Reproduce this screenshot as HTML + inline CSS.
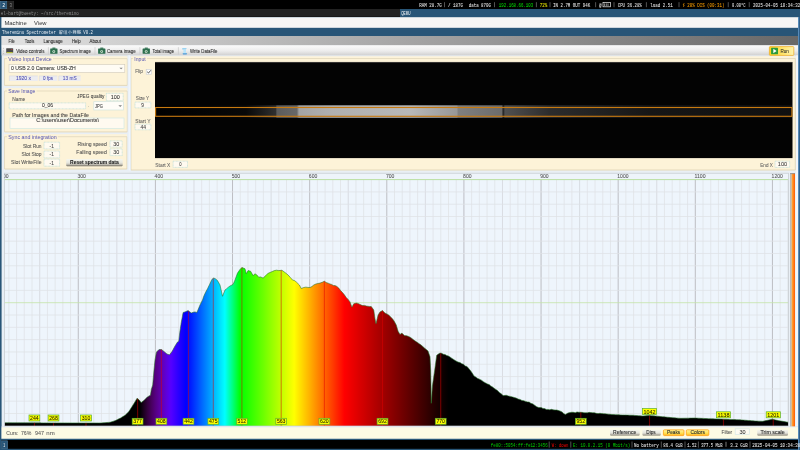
<!DOCTYPE html><html><head><meta charset="utf-8"><style>html,body{margin:0;padding:0;width:800px;height:450px;overflow:hidden;background:#000}svg{display:block}</style></head><body><svg width="800" height="450" viewBox="0 0 800 450"><defs><linearGradient id="mbar" x1="0" x2="1" y1="0" y2="0"><stop offset="0" stop-color="#e2e2e2"/><stop offset="0.5" stop-color="#a6a6a6"/><stop offset="1" stop-color="#686868"/></linearGradient><linearGradient id="tbar" x1="0" x2="0" y1="0" y2="1"><stop offset="0" stop-color="#fbfbfb"/><stop offset="0.55" stop-color="#ececec"/><stop offset="1" stop-color="#d0d0d0"/></linearGradient><linearGradient id="runbg" x1="0" x2="1" y1="0" y2="0"><stop offset="0" stop-color="#ffd21a"/><stop offset="1" stop-color="#fff4b0"/></linearGradient><linearGradient id="btn" x1="0" x2="0" y1="0" y2="1"><stop offset="0" stop-color="#f6f6ee"/><stop offset="0.55" stop-color="#e4e4dc"/><stop offset="0.8" stop-color="#b8b4aa"/><stop offset="1" stop-color="#6c685c"/></linearGradient><linearGradient id="obtn" x1="0" x2="0" y1="0" y2="1"><stop offset="0" stop-color="#fff6a0"/><stop offset="0.6" stop-color="#ffe050"/><stop offset="1" stop-color="#ffb020"/></linearGradient><linearGradient id="slider" x1="0" x2="1" y1="0" y2="0"><stop offset="0" stop-color="#b0b0b0"/><stop offset="0.28" stop-color="#c8c0b8"/><stop offset="0.3" stop-color="#ffb040"/><stop offset="1" stop-color="#ff5a00"/></linearGradient><linearGradient id="rborder" x1="0" x2="1" y1="0" y2="0"><stop offset="0" stop-color="#6aa0d0"/><stop offset="1" stop-color="#1e4a70"/></linearGradient><linearGradient id="camgrad" x1="0" x2="1" y1="0" y2="0"><stop offset="0" stop-color="#000"/><stop offset="0.142" stop-color="#080808"/><stop offset="0.167" stop-color="#1c1c1c"/><stop offset="0.189" stop-color="#303030"/><stop offset="0.1905" stop-color="#5c5c5c"/><stop offset="0.222" stop-color="#686868"/><stop offset="0.2253" stop-color="#a4a4a4"/><stop offset="0.277" stop-color="#b0b0b0"/><stop offset="0.4" stop-color="#b8b8b8"/><stop offset="0.4736" stop-color="#989898"/><stop offset="0.4752" stop-color="#808080"/><stop offset="0.5443" stop-color="#6c6c6c"/><stop offset="0.5459" stop-color="#1c1c1c"/><stop offset="0.549" stop-color="#505050"/><stop offset="0.62" stop-color="#2c2c2c"/><stop offset="0.777" stop-color="#161616"/><stop offset="1" stop-color="#101010"/></linearGradient><clipPath id="gc"><rect x="4.5" y="173.2" width="783.9" height="252.8"/></clipPath><linearGradient id="sp" x1="4.5" x2="788.4" y1="0" y2="0" gradientUnits="userSpaceOnUse"><stop offset="0.1630" stop-color="rgb(0,0,0)"/><stop offset="0.1679" stop-color="rgb(0,0,0)"/><stop offset="0.1728" stop-color="rgb(0,0,0)"/><stop offset="0.1777" stop-color="rgb(29,0,32)"/><stop offset="0.1827" stop-color="rgb(53,0,64)"/><stop offset="0.1876" stop-color="rgb(72,0,96)"/><stop offset="0.1925" stop-color="rgb(85,0,128)"/><stop offset="0.1974" stop-color="rgb(93,0,159)"/><stop offset="0.2023" stop-color="rgb(96,0,191)"/><stop offset="0.2073" stop-color="rgb(93,0,223)"/><stop offset="0.2122" stop-color="rgb(85,0,255)"/><stop offset="0.2171" stop-color="rgb(64,0,255)"/><stop offset="0.2220" stop-color="rgb(42,0,255)"/><stop offset="0.2269" stop-color="rgb(21,0,255)"/><stop offset="0.2319" stop-color="rgb(0,0,255)"/><stop offset="0.2368" stop-color="rgb(0,26,255)"/><stop offset="0.2417" stop-color="rgb(0,51,255)"/><stop offset="0.2466" stop-color="rgb(0,76,255)"/><stop offset="0.2515" stop-color="rgb(0,102,255)"/><stop offset="0.2565" stop-color="rgb(0,128,255)"/><stop offset="0.2614" stop-color="rgb(0,153,255)"/><stop offset="0.2663" stop-color="rgb(0,178,255)"/><stop offset="0.2712" stop-color="rgb(0,204,255)"/><stop offset="0.2761" stop-color="rgb(0,230,255)"/><stop offset="0.2811" stop-color="rgb(0,255,255)"/><stop offset="0.2860" stop-color="rgb(0,255,191)"/><stop offset="0.2909" stop-color="rgb(0,255,128)"/><stop offset="0.2958" stop-color="rgb(0,255,64)"/><stop offset="0.3007" stop-color="rgb(0,255,0)"/><stop offset="0.3057" stop-color="rgb(18,255,0)"/><stop offset="0.3106" stop-color="rgb(36,255,0)"/><stop offset="0.3155" stop-color="rgb(55,255,0)"/><stop offset="0.3204" stop-color="rgb(73,255,0)"/><stop offset="0.3253" stop-color="rgb(91,255,0)"/><stop offset="0.3303" stop-color="rgb(109,255,0)"/><stop offset="0.3352" stop-color="rgb(128,255,0)"/><stop offset="0.3401" stop-color="rgb(146,255,0)"/><stop offset="0.3450" stop-color="rgb(164,255,0)"/><stop offset="0.3499" stop-color="rgb(182,255,0)"/><stop offset="0.3549" stop-color="rgb(200,255,0)"/><stop offset="0.3598" stop-color="rgb(219,255,0)"/><stop offset="0.3647" stop-color="rgb(237,255,0)"/><stop offset="0.3696" stop-color="rgb(255,255,0)"/><stop offset="0.3745" stop-color="rgb(255,235,0)"/><stop offset="0.3794" stop-color="rgb(255,216,0)"/><stop offset="0.3844" stop-color="rgb(255,196,0)"/><stop offset="0.3893" stop-color="rgb(255,177,0)"/><stop offset="0.3942" stop-color="rgb(255,157,0)"/><stop offset="0.3991" stop-color="rgb(255,137,0)"/><stop offset="0.4040" stop-color="rgb(255,118,0)"/><stop offset="0.4090" stop-color="rgb(255,98,0)"/><stop offset="0.4139" stop-color="rgb(255,78,0)"/><stop offset="0.4188" stop-color="rgb(255,59,0)"/><stop offset="0.4237" stop-color="rgb(255,39,0)"/><stop offset="0.4286" stop-color="rgb(255,20,0)"/><stop offset="0.4336" stop-color="rgb(255,0,0)"/><stop offset="0.4385" stop-color="rgb(246,0,0)"/><stop offset="0.4434" stop-color="rgb(236,0,0)"/><stop offset="0.4483" stop-color="rgb(227,0,0)"/><stop offset="0.4532" stop-color="rgb(217,0,0)"/><stop offset="0.4582" stop-color="rgb(208,0,0)"/><stop offset="0.4631" stop-color="rgb(198,0,0)"/><stop offset="0.4680" stop-color="rgb(189,0,0)"/><stop offset="0.4729" stop-color="rgb(179,0,0)"/><stop offset="0.4778" stop-color="rgb(170,0,0)"/><stop offset="0.4828" stop-color="rgb(161,0,0)"/><stop offset="0.4877" stop-color="rgb(151,0,0)"/><stop offset="0.4926" stop-color="rgb(142,0,0)"/><stop offset="0.4975" stop-color="rgb(132,0,0)"/><stop offset="0.5024" stop-color="rgb(123,0,0)"/><stop offset="0.5074" stop-color="rgb(113,0,0)"/><stop offset="0.5123" stop-color="rgb(104,0,0)"/><stop offset="0.5172" stop-color="rgb(94,0,0)"/><stop offset="0.5221" stop-color="rgb(85,0,0)"/><stop offset="0.5270" stop-color="rgb(76,0,0)"/><stop offset="0.5320" stop-color="rgb(66,0,0)"/><stop offset="0.5369" stop-color="rgb(57,0,0)"/><stop offset="0.5418" stop-color="rgb(47,0,0)"/><stop offset="0.5467" stop-color="rgb(38,0,0)"/><stop offset="0.5516" stop-color="rgb(28,0,0)"/><stop offset="0.5566" stop-color="rgb(19,0,0)"/><stop offset="0.5615" stop-color="rgb(9,0,0)"/><stop offset="0.5664" stop-color="rgb(0,0,0)"/><stop offset="0.5713" stop-color="rgb(0,0,0)"/><stop offset="0.5762" stop-color="rgb(0,0,0)"/></linearGradient></defs><rect x="0.00" y="0.00" width="800.00" height="9.00" fill="#000" />
<rect x="0.30" y="1.20" width="6.50" height="7.60" fill="#285577" stroke="#4c7899" stroke-width="0.6"/>
<rect x="7.60" y="1.20" width="6.10" height="7.60" fill="#222222" stroke="#333" stroke-width="0.6"/>
<rect x="0.00" y="9.00" width="400.00" height="8.00" fill="#222222" />
<rect x="400.00" y="9.00" width="400.00" height="8.00" fill="#285577" />
<line x1="0.00" y1="16.60" x2="400.00" y2="16.60" stroke="#111" stroke-width="0.6" />
<rect x="0.00" y="17.00" width="800.00" height="433.00" fill="#285577" />
<rect x="1.40" y="17.20" width="797.00" height="10.70" fill="#f6f5f4" />
<rect x="1.40" y="27.90" width="797.00" height="8.10" fill="#285577" />
<rect x="1.60" y="36.00" width="796.40" height="402.80" fill="#e9eff5" />
<rect x="1.60" y="36.00" width="796.40" height="9.50" fill="url(#mbar)" />
<rect x="1.60" y="45.50" width="796.40" height="9.90" fill="url(#tbar)" />
<line x1="1.60" y1="45.70" x2="798.00" y2="45.70" stroke="#fafafa" stroke-width="0.5" />
<rect x="3.10" y="47.90" width="0.70" height="0.70" fill="#a0a0a0" />
<rect x="3.10" y="50.70" width="0.70" height="0.70" fill="#a0a0a0" />
<rect x="3.10" y="53.30" width="0.70" height="0.70" fill="#a0a0a0" />
<line x1="48.40" y1="47.20" x2="48.40" y2="54.60" stroke="#c8c8c8" stroke-width="0.7" />
<line x1="95.00" y1="47.20" x2="95.00" y2="54.60" stroke="#c8c8c8" stroke-width="0.7" />
<line x1="139.90" y1="47.20" x2="139.90" y2="54.60" stroke="#c8c8c8" stroke-width="0.7" />
<line x1="178.40" y1="47.20" x2="178.40" y2="54.60" stroke="#c8c8c8" stroke-width="0.7" />
<rect x="769.40" y="46.60" width="24.40" height="8.80" fill="url(#runbg)" stroke="#f0b030" stroke-width="0.8" rx="0.8"/>
<rect x="771.10" y="47.70" width="6.90" height="6.60" fill="#2e9a3c" rx="0.6"/>
<polygon points="773.3,48.8 773.3,53.2 776.6,51" fill="#fff"/>
<rect x="796.00" y="55.40" width="2.00" height="383.40" fill="#f2f6fa" />
<rect x="4.20" y="56.30" width="123.40" height="29.40" fill="#fdf3d8" />
<line x1="4.50" y1="58.60" x2="7.00" y2="58.60" stroke="#ddd3b8" stroke-width="0.7" />
<line x1="53.00" y1="58.60" x2="127.30" y2="58.60" stroke="#ddd3b8" stroke-width="0.7" />
<line x1="4.50" y1="58.60" x2="4.50" y2="85.40" stroke="#ddd3b8" stroke-width="0.7" />
<line x1="127.30" y1="58.60" x2="127.30" y2="85.40" stroke="#ddd3b8" stroke-width="0.8" />
<line x1="4.50" y1="85.40" x2="127.30" y2="85.40" stroke="#ddd2b4" stroke-width="0.8" />
<rect x="4.20" y="88.10" width="123.40" height="44.10" fill="#fdf3d8" />
<line x1="4.50" y1="91.00" x2="7.00" y2="91.00" stroke="#ddd3b8" stroke-width="0.7" />
<line x1="36.60" y1="91.00" x2="127.30" y2="91.00" stroke="#ddd3b8" stroke-width="0.7" />
<line x1="4.50" y1="91.00" x2="4.50" y2="131.90" stroke="#ddd3b8" stroke-width="0.7" />
<line x1="127.30" y1="91.00" x2="127.30" y2="131.90" stroke="#ddd3b8" stroke-width="0.8" />
<line x1="4.50" y1="131.90" x2="127.30" y2="131.90" stroke="#ddd2b4" stroke-width="0.8" />
<rect x="4.20" y="134.20" width="123.00" height="35.10" fill="#fdf3d8" />
<line x1="4.50" y1="136.70" x2="7.00" y2="136.70" stroke="#ddd3b8" stroke-width="0.7" />
<line x1="57.80" y1="136.70" x2="126.90" y2="136.70" stroke="#ddd3b8" stroke-width="0.7" />
<line x1="4.50" y1="136.70" x2="4.50" y2="169.00" stroke="#ddd3b8" stroke-width="0.7" />
<line x1="126.90" y1="136.70" x2="126.90" y2="169.00" stroke="#ddd3b8" stroke-width="0.8" />
<line x1="4.50" y1="169.00" x2="126.90" y2="169.00" stroke="#ddd2b4" stroke-width="0.8" />
<rect x="130.70" y="56.30" width="664.90" height="114.00" fill="#fdf3d8" />
<line x1="131.00" y1="58.50" x2="132.90" y2="58.50" stroke="#ddd3b8" stroke-width="0.7" />
<line x1="147.00" y1="58.50" x2="795.30" y2="58.50" stroke="#ddd3b8" stroke-width="0.7" />
<line x1="131.00" y1="58.50" x2="131.00" y2="170.00" stroke="#ddd3b8" stroke-width="0.7" />
<line x1="795.30" y1="58.50" x2="795.30" y2="170.00" stroke="#ddd3b8" stroke-width="0.8" />
<line x1="131.00" y1="170.00" x2="795.30" y2="170.00" stroke="#ddd2b4" stroke-width="0.8" />
<rect x="127.60" y="55.40" width="3.10" height="115.00" fill="#e6eef8" />
<line x1="129.20" y1="55.40" x2="129.20" y2="170.40" stroke="#f8fbff" stroke-width="0.8" />
<rect x="9.00" y="64.30" width="115.80" height="8.30" fill="#fffcf4" stroke="#cfc9b8" stroke-width="0.6"/>
<polygon points="119.4,67.8 122.8,67.8 121.1,69.2" fill="#808080"/>
<rect x="9.40" y="75.90" width="28.40" height="5.10" fill="#ececf0" />
<line x1="9.40" y1="75.90" x2="37.80" y2="75.90" stroke="#d6d6dc" stroke-width="0.5" />
<line x1="9.40" y1="75.90" x2="9.40" y2="81.00" stroke="#d6d6dc" stroke-width="0.5" />
<rect x="39.40" y="75.90" width="17.90" height="5.10" fill="#ececf0" />
<line x1="39.40" y1="75.90" x2="57.30" y2="75.90" stroke="#d6d6dc" stroke-width="0.5" />
<line x1="39.40" y1="75.90" x2="39.40" y2="81.00" stroke="#d6d6dc" stroke-width="0.5" />
<rect x="58.80" y="75.90" width="21.80" height="5.10" fill="#ececf0" />
<line x1="58.80" y1="75.90" x2="80.60" y2="75.90" stroke="#d6d6dc" stroke-width="0.5" />
<line x1="58.80" y1="75.90" x2="58.80" y2="81.00" stroke="#d6d6dc" stroke-width="0.5" />
<rect x="106.40" y="93.30" width="16.80" height="7.40" fill="#fffaf0" stroke="#b8dcd8" stroke-width="0.7" stroke-dasharray="0.9,0.5"/>
<rect x="9.20" y="102.90" width="76.40" height="5.90" fill="#fffaf0" stroke="#b8dcd8" stroke-width="0.7" stroke-dasharray="0.9,0.5"/>
<rect x="93.80" y="101.70" width="29.80" height="8.30" fill="#fffdf8" stroke="#d2e4e0" stroke-width="0.7" />
<polygon points="118.4,105.2 122.0,105.2 120.2,107.0" fill="#808080"/>
<rect x="10.00" y="118.00" width="114.00" height="10.40" fill="#fffaf0" stroke="#d2e8e4" stroke-width="0.7" />
<rect x="44.00" y="142.20" width="15.60" height="6.70" fill="#fffaf0" stroke="#b8dcd8" stroke-width="0.7" stroke-dasharray="0.9,0.5"/>
<rect x="44.00" y="151.10" width="15.60" height="6.70" fill="#fffaf0" stroke="#b8dcd8" stroke-width="0.7" stroke-dasharray="0.9,0.5"/>
<rect x="44.00" y="159.10" width="15.60" height="7.10" fill="#fffaf0" stroke="#b8dcd8" stroke-width="0.7" stroke-dasharray="0.9,0.5"/>
<rect x="110.00" y="140.90" width="12.20" height="6.20" fill="#fffaf0" stroke="#b8dcd8" stroke-width="0.7" stroke-dasharray="0.9,0.5"/>
<rect x="110.00" y="148.90" width="12.20" height="6.70" fill="#fffaf0" stroke="#b8dcd8" stroke-width="0.7" stroke-dasharray="0.9,0.5"/>
<rect x="66.20" y="159.10" width="56.50" height="7.10" fill="url(#btn)" rx="1"/>
<rect x="146.20" y="69.30" width="5.40" height="4.90" fill="#ffffff" stroke="#c8ccd0" stroke-width="0.6"/>
<polyline points="147.2,71.8 148.5,73.0 150.8,70.3" fill="none" stroke="#303030" stroke-width="0.8"/>
<rect x="135.00" y="102.10" width="15.90" height="5.80" fill="#fffaf0" stroke="#b8dcd8" stroke-width="0.7" stroke-dasharray="0.9,0.5"/>
<rect x="135.00" y="124.20" width="15.90" height="5.60" fill="#fffaf0" stroke="#b8dcd8" stroke-width="0.7" stroke-dasharray="0.9,0.5"/>
<rect x="173.10" y="161.20" width="14.40" height="6.20" fill="#fffaf0" stroke="#b8dcd8" stroke-width="0.7" stroke-dasharray="0.9,0.5"/>
<rect x="775.00" y="161.20" width="14.70" height="6.20" fill="#fffaf0" stroke="#b8dcd8" stroke-width="0.7" stroke-dasharray="0.9,0.5"/>
<rect x="155.00" y="62.20" width="637.50" height="95.90" fill="#030303" />
<line x1="155.00" y1="62.40" x2="792.50" y2="62.40" stroke="#3a3a3a" stroke-width="0.5" />
<rect x="155.60" y="105.30" width="636.40" height="12.50" fill="url(#camgrad)" />
<rect x="155.60" y="107.50" width="636.30" height="8.80" fill="none" stroke="#c87a10" stroke-width="1.1"/>
<g clip-path="url(#gc)">
<rect x="4.50" y="173.20" width="783.90" height="252.80" fill="#eef5fc" />
<line x1="8.86" y1="179.60" x2="8.86" y2="426.00" stroke="#dfe1e5" stroke-width="0.75" />
<line x1="16.58" y1="179.60" x2="16.58" y2="426.00" stroke="#dfe1e5" stroke-width="0.75" />
<line x1="24.29" y1="179.60" x2="24.29" y2="426.00" stroke="#dfe1e5" stroke-width="0.75" />
<line x1="32.00" y1="179.60" x2="32.00" y2="426.00" stroke="#dfe1e5" stroke-width="0.75" />
<line x1="39.71" y1="179.60" x2="39.71" y2="426.00" stroke="#d2d4d9" stroke-width="0.75" />
<line x1="47.43" y1="179.60" x2="47.43" y2="426.00" stroke="#dfe1e5" stroke-width="0.75" />
<line x1="55.14" y1="179.60" x2="55.14" y2="426.00" stroke="#dfe1e5" stroke-width="0.75" />
<line x1="62.85" y1="179.60" x2="62.85" y2="426.00" stroke="#dfe1e5" stroke-width="0.75" />
<line x1="70.57" y1="179.60" x2="70.57" y2="426.00" stroke="#dfe1e5" stroke-width="0.75" />
<line x1="78.28" y1="179.60" x2="78.28" y2="426.00" stroke="#b8b8bc" stroke-width="0.9" />
<line x1="85.99" y1="179.60" x2="85.99" y2="426.00" stroke="#dfe1e5" stroke-width="0.75" />
<line x1="93.70" y1="179.60" x2="93.70" y2="426.00" stroke="#dfe1e5" stroke-width="0.75" />
<line x1="101.42" y1="179.60" x2="101.42" y2="426.00" stroke="#dfe1e5" stroke-width="0.75" />
<line x1="109.13" y1="179.60" x2="109.13" y2="426.00" stroke="#dfe1e5" stroke-width="0.75" />
<line x1="116.84" y1="179.60" x2="116.84" y2="426.00" stroke="#d2d4d9" stroke-width="0.75" />
<line x1="124.55" y1="179.60" x2="124.55" y2="426.00" stroke="#dfe1e5" stroke-width="0.75" />
<line x1="132.27" y1="179.60" x2="132.27" y2="426.00" stroke="#dfe1e5" stroke-width="0.75" />
<line x1="139.98" y1="179.60" x2="139.98" y2="426.00" stroke="#dfe1e5" stroke-width="0.75" />
<line x1="147.69" y1="179.60" x2="147.69" y2="426.00" stroke="#dfe1e5" stroke-width="0.75" />
<line x1="155.41" y1="179.60" x2="155.41" y2="426.00" stroke="#b8b8bc" stroke-width="0.9" />
<line x1="163.12" y1="179.60" x2="163.12" y2="426.00" stroke="#dfe1e5" stroke-width="0.75" />
<line x1="170.83" y1="179.60" x2="170.83" y2="426.00" stroke="#dfe1e5" stroke-width="0.75" />
<line x1="178.54" y1="179.60" x2="178.54" y2="426.00" stroke="#dfe1e5" stroke-width="0.75" />
<line x1="186.26" y1="179.60" x2="186.26" y2="426.00" stroke="#dfe1e5" stroke-width="0.75" />
<line x1="193.97" y1="179.60" x2="193.97" y2="426.00" stroke="#d2d4d9" stroke-width="0.75" />
<line x1="201.68" y1="179.60" x2="201.68" y2="426.00" stroke="#dfe1e5" stroke-width="0.75" />
<line x1="209.40" y1="179.60" x2="209.40" y2="426.00" stroke="#dfe1e5" stroke-width="0.75" />
<line x1="217.11" y1="179.60" x2="217.11" y2="426.00" stroke="#dfe1e5" stroke-width="0.75" />
<line x1="224.82" y1="179.60" x2="224.82" y2="426.00" stroke="#dfe1e5" stroke-width="0.75" />
<line x1="232.53" y1="179.60" x2="232.53" y2="426.00" stroke="#b8b8bc" stroke-width="0.9" />
<line x1="240.25" y1="179.60" x2="240.25" y2="426.00" stroke="#dfe1e5" stroke-width="0.75" />
<line x1="247.96" y1="179.60" x2="247.96" y2="426.00" stroke="#dfe1e5" stroke-width="0.75" />
<line x1="255.67" y1="179.60" x2="255.67" y2="426.00" stroke="#dfe1e5" stroke-width="0.75" />
<line x1="263.39" y1="179.60" x2="263.39" y2="426.00" stroke="#dfe1e5" stroke-width="0.75" />
<line x1="271.10" y1="179.60" x2="271.10" y2="426.00" stroke="#d2d4d9" stroke-width="0.75" />
<line x1="278.81" y1="179.60" x2="278.81" y2="426.00" stroke="#dfe1e5" stroke-width="0.75" />
<line x1="286.52" y1="179.60" x2="286.52" y2="426.00" stroke="#dfe1e5" stroke-width="0.75" />
<line x1="294.24" y1="179.60" x2="294.24" y2="426.00" stroke="#dfe1e5" stroke-width="0.75" />
<line x1="301.95" y1="179.60" x2="301.95" y2="426.00" stroke="#dfe1e5" stroke-width="0.75" />
<line x1="309.66" y1="179.60" x2="309.66" y2="426.00" stroke="#b8b8bc" stroke-width="0.9" />
<line x1="317.37" y1="179.60" x2="317.37" y2="426.00" stroke="#dfe1e5" stroke-width="0.75" />
<line x1="325.09" y1="179.60" x2="325.09" y2="426.00" stroke="#dfe1e5" stroke-width="0.75" />
<line x1="332.80" y1="179.60" x2="332.80" y2="426.00" stroke="#dfe1e5" stroke-width="0.75" />
<line x1="340.51" y1="179.60" x2="340.51" y2="426.00" stroke="#dfe1e5" stroke-width="0.75" />
<line x1="348.23" y1="179.60" x2="348.23" y2="426.00" stroke="#d2d4d9" stroke-width="0.75" />
<line x1="355.94" y1="179.60" x2="355.94" y2="426.00" stroke="#dfe1e5" stroke-width="0.75" />
<line x1="363.65" y1="179.60" x2="363.65" y2="426.00" stroke="#dfe1e5" stroke-width="0.75" />
<line x1="371.36" y1="179.60" x2="371.36" y2="426.00" stroke="#dfe1e5" stroke-width="0.75" />
<line x1="379.08" y1="179.60" x2="379.08" y2="426.00" stroke="#dfe1e5" stroke-width="0.75" />
<line x1="386.79" y1="179.60" x2="386.79" y2="426.00" stroke="#b8b8bc" stroke-width="0.9" />
<line x1="394.50" y1="179.60" x2="394.50" y2="426.00" stroke="#dfe1e5" stroke-width="0.75" />
<line x1="402.22" y1="179.60" x2="402.22" y2="426.00" stroke="#dfe1e5" stroke-width="0.75" />
<line x1="409.93" y1="179.60" x2="409.93" y2="426.00" stroke="#dfe1e5" stroke-width="0.75" />
<line x1="417.64" y1="179.60" x2="417.64" y2="426.00" stroke="#dfe1e5" stroke-width="0.75" />
<line x1="425.35" y1="179.60" x2="425.35" y2="426.00" stroke="#d2d4d9" stroke-width="0.75" />
<line x1="433.07" y1="179.60" x2="433.07" y2="426.00" stroke="#dfe1e5" stroke-width="0.75" />
<line x1="440.78" y1="179.60" x2="440.78" y2="426.00" stroke="#dfe1e5" stroke-width="0.75" />
<line x1="448.49" y1="179.60" x2="448.49" y2="426.00" stroke="#dfe1e5" stroke-width="0.75" />
<line x1="456.21" y1="179.60" x2="456.21" y2="426.00" stroke="#dfe1e5" stroke-width="0.75" />
<line x1="463.92" y1="179.60" x2="463.92" y2="426.00" stroke="#b8b8bc" stroke-width="0.9" />
<line x1="471.63" y1="179.60" x2="471.63" y2="426.00" stroke="#dfe1e5" stroke-width="0.75" />
<line x1="479.34" y1="179.60" x2="479.34" y2="426.00" stroke="#dfe1e5" stroke-width="0.75" />
<line x1="487.06" y1="179.60" x2="487.06" y2="426.00" stroke="#dfe1e5" stroke-width="0.75" />
<line x1="494.77" y1="179.60" x2="494.77" y2="426.00" stroke="#dfe1e5" stroke-width="0.75" />
<line x1="502.48" y1="179.60" x2="502.48" y2="426.00" stroke="#d2d4d9" stroke-width="0.75" />
<line x1="510.19" y1="179.60" x2="510.19" y2="426.00" stroke="#dfe1e5" stroke-width="0.75" />
<line x1="517.91" y1="179.60" x2="517.91" y2="426.00" stroke="#dfe1e5" stroke-width="0.75" />
<line x1="525.62" y1="179.60" x2="525.62" y2="426.00" stroke="#dfe1e5" stroke-width="0.75" />
<line x1="533.33" y1="179.60" x2="533.33" y2="426.00" stroke="#dfe1e5" stroke-width="0.75" />
<line x1="541.05" y1="179.60" x2="541.05" y2="426.00" stroke="#b8b8bc" stroke-width="0.9" />
<line x1="548.76" y1="179.60" x2="548.76" y2="426.00" stroke="#dfe1e5" stroke-width="0.75" />
<line x1="556.47" y1="179.60" x2="556.47" y2="426.00" stroke="#dfe1e5" stroke-width="0.75" />
<line x1="564.18" y1="179.60" x2="564.18" y2="426.00" stroke="#dfe1e5" stroke-width="0.75" />
<line x1="571.90" y1="179.60" x2="571.90" y2="426.00" stroke="#dfe1e5" stroke-width="0.75" />
<line x1="579.61" y1="179.60" x2="579.61" y2="426.00" stroke="#d2d4d9" stroke-width="0.75" />
<line x1="587.32" y1="179.60" x2="587.32" y2="426.00" stroke="#dfe1e5" stroke-width="0.75" />
<line x1="595.04" y1="179.60" x2="595.04" y2="426.00" stroke="#dfe1e5" stroke-width="0.75" />
<line x1="602.75" y1="179.60" x2="602.75" y2="426.00" stroke="#dfe1e5" stroke-width="0.75" />
<line x1="610.46" y1="179.60" x2="610.46" y2="426.00" stroke="#dfe1e5" stroke-width="0.75" />
<line x1="618.17" y1="179.60" x2="618.17" y2="426.00" stroke="#b8b8bc" stroke-width="0.9" />
<line x1="625.89" y1="179.60" x2="625.89" y2="426.00" stroke="#dfe1e5" stroke-width="0.75" />
<line x1="633.60" y1="179.60" x2="633.60" y2="426.00" stroke="#dfe1e5" stroke-width="0.75" />
<line x1="641.31" y1="179.60" x2="641.31" y2="426.00" stroke="#dfe1e5" stroke-width="0.75" />
<line x1="649.03" y1="179.60" x2="649.03" y2="426.00" stroke="#dfe1e5" stroke-width="0.75" />
<line x1="656.74" y1="179.60" x2="656.74" y2="426.00" stroke="#d2d4d9" stroke-width="0.75" />
<line x1="664.45" y1="179.60" x2="664.45" y2="426.00" stroke="#dfe1e5" stroke-width="0.75" />
<line x1="672.16" y1="179.60" x2="672.16" y2="426.00" stroke="#dfe1e5" stroke-width="0.75" />
<line x1="679.88" y1="179.60" x2="679.88" y2="426.00" stroke="#dfe1e5" stroke-width="0.75" />
<line x1="687.59" y1="179.60" x2="687.59" y2="426.00" stroke="#dfe1e5" stroke-width="0.75" />
<line x1="695.30" y1="179.60" x2="695.30" y2="426.00" stroke="#b8b8bc" stroke-width="0.9" />
<line x1="703.01" y1="179.60" x2="703.01" y2="426.00" stroke="#dfe1e5" stroke-width="0.75" />
<line x1="710.73" y1="179.60" x2="710.73" y2="426.00" stroke="#dfe1e5" stroke-width="0.75" />
<line x1="718.44" y1="179.60" x2="718.44" y2="426.00" stroke="#dfe1e5" stroke-width="0.75" />
<line x1="726.15" y1="179.60" x2="726.15" y2="426.00" stroke="#dfe1e5" stroke-width="0.75" />
<line x1="733.87" y1="179.60" x2="733.87" y2="426.00" stroke="#d2d4d9" stroke-width="0.75" />
<line x1="741.58" y1="179.60" x2="741.58" y2="426.00" stroke="#dfe1e5" stroke-width="0.75" />
<line x1="749.29" y1="179.60" x2="749.29" y2="426.00" stroke="#dfe1e5" stroke-width="0.75" />
<line x1="757.00" y1="179.60" x2="757.00" y2="426.00" stroke="#dfe1e5" stroke-width="0.75" />
<line x1="764.72" y1="179.60" x2="764.72" y2="426.00" stroke="#dfe1e5" stroke-width="0.75" />
<line x1="772.43" y1="179.60" x2="772.43" y2="426.00" stroke="#b8b8bc" stroke-width="0.9" />
<line x1="780.14" y1="179.60" x2="780.14" y2="426.00" stroke="#dfe1e5" stroke-width="0.75" />
<line x1="787.86" y1="179.60" x2="787.86" y2="426.00" stroke="#dfe1e5" stroke-width="0.75" />
<line x1="4.50" y1="191.91" x2="788.40" y2="191.91" stroke="#dfe1e5" stroke-width="0.75" />
<line x1="4.50" y1="204.22" x2="788.40" y2="204.22" stroke="#dfe1e5" stroke-width="0.75" />
<line x1="4.50" y1="216.53" x2="788.40" y2="216.53" stroke="#dfe1e5" stroke-width="0.75" />
<line x1="4.50" y1="228.84" x2="788.40" y2="228.84" stroke="#dfe1e5" stroke-width="0.75" />
<line x1="4.50" y1="241.15" x2="788.40" y2="241.15" stroke="#dfe1e5" stroke-width="0.75" />
<line x1="4.50" y1="253.46" x2="788.40" y2="253.46" stroke="#dfe1e5" stroke-width="0.75" />
<line x1="4.50" y1="265.77" x2="788.40" y2="265.77" stroke="#dfe1e5" stroke-width="0.75" />
<line x1="4.50" y1="278.08" x2="788.40" y2="278.08" stroke="#dfe1e5" stroke-width="0.75" />
<line x1="4.50" y1="290.39" x2="788.40" y2="290.39" stroke="#dfe1e5" stroke-width="0.75" />
<line x1="4.50" y1="315.01" x2="788.40" y2="315.01" stroke="#dfe1e5" stroke-width="0.75" />
<line x1="4.50" y1="327.32" x2="788.40" y2="327.32" stroke="#dfe1e5" stroke-width="0.75" />
<line x1="4.50" y1="339.63" x2="788.40" y2="339.63" stroke="#dfe1e5" stroke-width="0.75" />
<line x1="4.50" y1="351.94" x2="788.40" y2="351.94" stroke="#dfe1e5" stroke-width="0.75" />
<line x1="4.50" y1="364.25" x2="788.40" y2="364.25" stroke="#dfe1e5" stroke-width="0.75" />
<line x1="4.50" y1="376.56" x2="788.40" y2="376.56" stroke="#dfe1e5" stroke-width="0.75" />
<line x1="4.50" y1="388.87" x2="788.40" y2="388.87" stroke="#dfe1e5" stroke-width="0.75" />
<line x1="4.50" y1="401.18" x2="788.40" y2="401.18" stroke="#dfe1e5" stroke-width="0.75" />
<line x1="4.50" y1="413.49" x2="788.40" y2="413.49" stroke="#dfe1e5" stroke-width="0.75" />
<rect x="4.50" y="173.20" width="783.90" height="6.40" fill="#eef4fa" />
<line x1="4.50" y1="179.60" x2="788.40" y2="179.60" stroke="#b4dc96" stroke-width="0.9" />
<line x1="4.50" y1="302.70" x2="788.40" y2="302.70" stroke="#c4e2a8" stroke-width="0.8" />
<polygon points="4.5,426.0 4.50,422.80 6.12,422.80 7.74,422.81 9.36,422.81 10.97,422.81 12.59,422.82 14.21,422.82 15.83,422.82 17.45,422.83 19.07,422.83 20.69,422.83 22.31,422.84 23.92,422.84 25.54,422.84 27.16,422.85 28.78,422.85 30.40,422.85 32.02,422.86 33.64,422.86 35.25,422.86 36.87,422.87 38.49,422.87 40.11,422.87 41.73,422.88 43.35,422.88 44.97,422.88 46.58,422.89 48.20,422.89 49.82,422.89 51.44,422.90 53.06,422.90 54.68,422.91 56.30,422.91 57.92,422.91 59.53,422.92 61.15,422.92 62.77,422.92 64.39,422.93 66.01,422.93 67.63,422.93 69.25,422.94 70.86,422.94 72.48,422.94 74.10,422.95 75.72,422.95 77.34,422.95 78.96,422.96 80.58,422.96 82.19,422.96 83.81,422.97 85.43,422.97 87.05,422.97 88.67,422.98 90.29,422.98 91.91,422.98 93.53,422.99 95.14,422.99 96.76,422.99 98.38,423.00 100.00,423.00 101.67,422.88 103.33,422.77 105.00,422.65 106.67,422.53 108.33,422.42 110.00,422.30 111.77,421.73 113.53,421.17 115.30,420.60 117.10,419.70 118.90,418.80 120.70,417.90 122.90,416.55 125.10,415.20 126.90,413.45 128.70,411.70 130.45,409.00 132.20,406.30 134.90,401.90 137.10,398.20 139.30,400.10 141.10,402.60 143.80,400.60 145.55,398.80 147.30,397.00 150.40,395.20 151.30,389.40 152.70,385.00 154.00,370.00 155.00,360.00 156.50,352.00 159.00,349.50 161.50,349.50 164.00,351.50 167.00,354.00 169.50,354.80 172.00,351.50 175.00,346.00 177.50,342.00 178.75,341.25 179.75,332.50 181.25,322.50 183.10,312.50 185.00,311.90 188.10,310.60 191.25,313.00 193.12,312.29 195.00,311.90 196.90,312.50 200.00,305.00 202.50,300.00 203.75,296.25 205.62,292.19 207.50,288.75 209.70,284.21 211.90,279.40 213.75,278.00 215.62,278.92 217.50,280.60 220.00,285.00 222.50,296.25 225.00,290.00 226.67,288.70 228.33,287.21 230.00,286.00 233.10,284.40 235.00,280.00 237.50,273.10 240.00,269.40 241.90,267.50 245.00,268.75 246.25,273.75 248.10,270.60 250.60,271.25 253.10,275.60 255.00,273.75 256.90,275.00 258.75,277.25 260.60,276.90 263.10,278.10 266.25,275.00 268.12,273.35 270.00,272.50 272.20,271.56 274.40,270.60 276.57,270.18 278.75,270.60 281.90,270.25 285.00,272.50 288.10,275.00 290.30,277.44 292.50,280.00 294.38,280.56 296.25,281.90 299.40,285.00 301.25,288.50 303.75,287.50 305.83,287.13 307.92,287.43 310.00,287.50 311.88,286.54 313.75,285.00 315.83,284.03 317.92,283.48 320.00,283.10 322.20,282.29 324.40,281.25 326.27,282.57 328.13,283.15 330.00,284.00 331.67,284.44 333.33,285.50 335.00,285.60 336.88,286.44 338.75,288.10 340.62,290.62 342.50,292.50 344.38,294.81 346.25,297.50 348.12,299.38 350.00,301.90 351.90,307.25 353.75,303.75 356.25,303.10 357.92,303.39 359.58,304.19 361.25,305.00 362.92,305.62 364.58,305.38 366.25,306.00 367.92,306.24 369.58,306.46 371.25,306.50 373.75,310.00 375.00,318.75 376.00,323.75 378.10,315.00 380.00,311.90 382.50,310.60 385.00,313.10 386.88,313.94 388.75,315.00 390.62,316.92 392.50,318.75 394.38,321.48 396.25,325.00 398.10,331.25 400.00,334.40 401.90,333.10 404.40,335.60 406.57,335.65 408.75,336.50 410.93,337.69 413.10,339.40 415.30,341.11 417.50,342.50 419.17,343.68 420.83,344.83 422.50,346.25 424.70,348.20 426.90,350.00 428.00,351.00 429.40,355.00 430.00,356.70 430.70,370.00 431.00,384.70 431.30,403.30 432.40,386.00 434.70,370.00 436.70,355.30 438.35,354.11 440.00,353.00 441.67,353.32 443.33,354.26 445.00,354.50 446.67,355.51 448.33,355.94 450.00,357.00 452.00,358.40 454.00,359.69 456.00,361.00 458.00,362.09 460.00,362.50 461.75,363.71 463.50,364.31 465.25,365.93 467.00,366.50 470.00,370.00 472.00,372.66 474.00,376.00 475.67,376.93 477.33,378.23 479.00,379.00 481.38,380.14 483.75,381.90 485.62,382.94 487.50,384.00 489.17,384.55 490.83,386.08 492.50,386.90 494.17,388.37 495.83,389.43 497.50,390.60 499.37,392.60 501.23,393.77 503.10,395.60 506.25,395.25 508.33,395.98 510.42,396.43 512.50,396.90 514.38,397.60 516.25,398.11 518.12,399.08 520.00,399.40 521.88,400.43 523.75,400.63 525.62,401.42 527.50,401.90 529.17,402.12 530.83,403.31 532.50,403.75 534.58,405.13 536.67,406.69 538.75,407.50 541.25,407.50 542.92,408.42 544.58,408.57 546.25,409.40 548.00,409.42 549.75,409.79 551.50,409.33 553.25,409.85 555.00,410.00 556.88,410.00 558.75,410.60 560.46,411.21 562.17,412.10 563.89,413.69 565.60,414.40 567.80,413.12 570.00,412.50 571.75,412.23 573.50,412.32 575.25,412.71 577.00,411.96 578.75,412.25 580.50,412.25 582.21,412.36 583.93,412.72 585.64,412.73 587.36,412.83 589.07,412.37 590.79,412.56 592.50,412.70 594.38,412.72 596.25,413.35 598.12,413.56 600.00,413.30 601.71,413.47 603.43,413.64 605.14,413.81 606.86,413.99 608.57,414.16 610.29,414.33 612.00,414.50 613.75,414.58 615.50,414.67 617.25,414.75 619.00,414.83 620.75,414.92 622.50,415.00 624.25,415.04 626.00,415.08 627.75,415.12 629.50,415.17 631.25,415.21 633.00,415.25 634.80,415.40 636.60,415.55 638.40,415.70 640.20,415.85 642.00,416.00 643.88,415.88 645.75,415.75 647.62,415.62 649.50,415.50 651.50,415.67 653.50,415.83 655.50,416.00 657.21,416.17 658.93,416.34 660.64,416.51 662.36,416.69 664.07,416.86 665.79,417.03 667.50,417.20 669.29,417.36 671.07,417.51 672.86,417.67 674.64,417.83 676.43,417.99 678.21,418.14 680.00,418.30 681.67,418.27 683.33,418.23 685.00,418.20 686.67,418.17 688.33,418.13 690.00,418.10 691.67,418.07 693.33,418.03 695.00,418.00 696.67,418.08 698.33,418.17 700.00,418.25 701.67,418.33 703.33,418.42 705.00,418.50 706.67,418.58 708.33,418.67 710.00,418.75 711.67,418.80 713.33,418.85 715.00,418.90 716.67,418.95 718.33,419.00 720.00,419.05 721.67,419.10 723.33,419.15 725.00,419.20 726.67,419.27 728.33,419.33 730.00,419.40 731.67,419.47 733.33,419.53 735.00,419.60 736.67,419.67 738.33,419.73 740.00,419.80 741.67,419.93 743.33,420.07 745.00,420.20 746.67,420.33 748.33,420.47 750.00,420.60 751.67,420.73 753.33,420.87 755.00,421.00 756.88,421.07 758.75,421.15 760.62,421.23 762.50,421.30 764.12,420.95 765.75,420.60 767.38,420.25 769.00,419.90 770.62,419.55 772.25,419.20 773.94,419.57 775.62,419.95 777.31,420.32 779.00,420.70 780.80,421.00 782.60,421.30 784.40,421.60 786.20,421.90 788.00,422.20 788.4,422.2 788.4,426.0" fill="url(#sp)"/>
<polyline points="4.50,422.80 6.12,422.80 7.74,422.81 9.36,422.81 10.97,422.81 12.59,422.82 14.21,422.82 15.83,422.82 17.45,422.83 19.07,422.83 20.69,422.83 22.31,422.84 23.92,422.84 25.54,422.84 27.16,422.85 28.78,422.85 30.40,422.85 32.02,422.86 33.64,422.86 35.25,422.86 36.87,422.87 38.49,422.87 40.11,422.87 41.73,422.88 43.35,422.88 44.97,422.88 46.58,422.89 48.20,422.89 49.82,422.89 51.44,422.90 53.06,422.90 54.68,422.91 56.30,422.91 57.92,422.91 59.53,422.92 61.15,422.92 62.77,422.92 64.39,422.93 66.01,422.93 67.63,422.93 69.25,422.94 70.86,422.94 72.48,422.94 74.10,422.95 75.72,422.95 77.34,422.95 78.96,422.96 80.58,422.96 82.19,422.96 83.81,422.97 85.43,422.97 87.05,422.97 88.67,422.98 90.29,422.98 91.91,422.98 93.53,422.99 95.14,422.99 96.76,422.99 98.38,423.00 100.00,423.00 101.67,422.88 103.33,422.77 105.00,422.65 106.67,422.53 108.33,422.42 110.00,422.30 111.77,421.73 113.53,421.17 115.30,420.60 117.10,419.70 118.90,418.80 120.70,417.90 122.90,416.55 125.10,415.20 126.90,413.45 128.70,411.70 130.45,409.00 132.20,406.30 134.90,401.90 137.10,398.20 139.30,400.10 141.10,402.60 143.80,400.60 145.55,398.80 147.30,397.00 150.40,395.20 151.30,389.40 152.70,385.00 154.00,370.00 155.00,360.00 156.50,352.00 159.00,349.50 161.50,349.50 164.00,351.50 167.00,354.00 169.50,354.80 172.00,351.50 175.00,346.00 177.50,342.00 178.75,341.25 179.75,332.50 181.25,322.50 183.10,312.50 185.00,311.90 188.10,310.60 191.25,313.00 193.12,312.29 195.00,311.90 196.90,312.50 200.00,305.00 202.50,300.00 203.75,296.25 205.62,292.19 207.50,288.75 209.70,284.21 211.90,279.40 213.75,278.00 215.62,278.92 217.50,280.60 220.00,285.00 222.50,296.25 225.00,290.00 226.67,288.70 228.33,287.21 230.00,286.00 233.10,284.40 235.00,280.00 237.50,273.10 240.00,269.40 241.90,267.50 245.00,268.75 246.25,273.75 248.10,270.60 250.60,271.25 253.10,275.60 255.00,273.75 256.90,275.00 258.75,277.25 260.60,276.90 263.10,278.10 266.25,275.00 268.12,273.35 270.00,272.50 272.20,271.56 274.40,270.60 276.57,270.18 278.75,270.60 281.90,270.25 285.00,272.50 288.10,275.00 290.30,277.44 292.50,280.00 294.38,280.56 296.25,281.90 299.40,285.00 301.25,288.50 303.75,287.50 305.83,287.13 307.92,287.43 310.00,287.50 311.88,286.54 313.75,285.00 315.83,284.03 317.92,283.48 320.00,283.10 322.20,282.29 324.40,281.25 326.27,282.57 328.13,283.15 330.00,284.00 331.67,284.44 333.33,285.50 335.00,285.60 336.88,286.44 338.75,288.10 340.62,290.62 342.50,292.50 344.38,294.81 346.25,297.50 348.12,299.38 350.00,301.90 351.90,307.25 353.75,303.75 356.25,303.10 357.92,303.39 359.58,304.19 361.25,305.00 362.92,305.62 364.58,305.38 366.25,306.00 367.92,306.24 369.58,306.46 371.25,306.50 373.75,310.00 375.00,318.75 376.00,323.75 378.10,315.00 380.00,311.90 382.50,310.60 385.00,313.10 386.88,313.94 388.75,315.00 390.62,316.92 392.50,318.75 394.38,321.48 396.25,325.00 398.10,331.25 400.00,334.40 401.90,333.10 404.40,335.60 406.57,335.65 408.75,336.50 410.93,337.69 413.10,339.40 415.30,341.11 417.50,342.50 419.17,343.68 420.83,344.83 422.50,346.25 424.70,348.20 426.90,350.00 428.00,351.00 429.40,355.00 430.00,356.70 430.70,370.00 431.00,384.70 431.30,403.30 432.40,386.00 434.70,370.00 436.70,355.30 438.35,354.11 440.00,353.00 441.67,353.32 443.33,354.26 445.00,354.50 446.67,355.51 448.33,355.94 450.00,357.00 452.00,358.40 454.00,359.69 456.00,361.00 458.00,362.09 460.00,362.50 461.75,363.71 463.50,364.31 465.25,365.93 467.00,366.50 470.00,370.00 472.00,372.66 474.00,376.00 475.67,376.93 477.33,378.23 479.00,379.00 481.38,380.14 483.75,381.90 485.62,382.94 487.50,384.00 489.17,384.55 490.83,386.08 492.50,386.90 494.17,388.37 495.83,389.43 497.50,390.60 499.37,392.60 501.23,393.77 503.10,395.60 506.25,395.25 508.33,395.98 510.42,396.43 512.50,396.90 514.38,397.60 516.25,398.11 518.12,399.08 520.00,399.40 521.88,400.43 523.75,400.63 525.62,401.42 527.50,401.90 529.17,402.12 530.83,403.31 532.50,403.75 534.58,405.13 536.67,406.69 538.75,407.50 541.25,407.50 542.92,408.42 544.58,408.57 546.25,409.40 548.00,409.42 549.75,409.79 551.50,409.33 553.25,409.85 555.00,410.00 556.88,410.00 558.75,410.60 560.46,411.21 562.17,412.10 563.89,413.69 565.60,414.40 567.80,413.12 570.00,412.50 571.75,412.23 573.50,412.32 575.25,412.71 577.00,411.96 578.75,412.25 580.50,412.25 582.21,412.36 583.93,412.72 585.64,412.73 587.36,412.83 589.07,412.37 590.79,412.56 592.50,412.70 594.38,412.72 596.25,413.35 598.12,413.56 600.00,413.30 601.71,413.47 603.43,413.64 605.14,413.81 606.86,413.99 608.57,414.16 610.29,414.33 612.00,414.50 613.75,414.58 615.50,414.67 617.25,414.75 619.00,414.83 620.75,414.92 622.50,415.00 624.25,415.04 626.00,415.08 627.75,415.12 629.50,415.17 631.25,415.21 633.00,415.25 634.80,415.40 636.60,415.55 638.40,415.70 640.20,415.85 642.00,416.00 643.88,415.88 645.75,415.75 647.62,415.62 649.50,415.50 651.50,415.67 653.50,415.83 655.50,416.00 657.21,416.17 658.93,416.34 660.64,416.51 662.36,416.69 664.07,416.86 665.79,417.03 667.50,417.20 669.29,417.36 671.07,417.51 672.86,417.67 674.64,417.83 676.43,417.99 678.21,418.14 680.00,418.30 681.67,418.27 683.33,418.23 685.00,418.20 686.67,418.17 688.33,418.13 690.00,418.10 691.67,418.07 693.33,418.03 695.00,418.00 696.67,418.08 698.33,418.17 700.00,418.25 701.67,418.33 703.33,418.42 705.00,418.50 706.67,418.58 708.33,418.67 710.00,418.75 711.67,418.80 713.33,418.85 715.00,418.90 716.67,418.95 718.33,419.00 720.00,419.05 721.67,419.10 723.33,419.15 725.00,419.20 726.67,419.27 728.33,419.33 730.00,419.40 731.67,419.47 733.33,419.53 735.00,419.60 736.67,419.67 738.33,419.73 740.00,419.80 741.67,419.93 743.33,420.07 745.00,420.20 746.67,420.33 748.33,420.47 750.00,420.60 751.67,420.73 753.33,420.87 755.00,421.00 756.88,421.07 758.75,421.15 760.62,421.23 762.50,421.30 764.12,420.95 765.75,420.60 767.38,420.25 769.00,419.90 770.62,419.55 772.25,419.20 773.94,419.57 775.62,419.95 777.31,420.32 779.00,420.70 780.80,421.00 782.60,421.30 784.40,421.60 786.20,421.90 788.00,422.20" fill="none" stroke="rgba(40,115,40,0.75)" stroke-width="0.75"/>
<line x1="34.40" y1="422.86" x2="34.40" y2="426.00" stroke="rgba(225,0,0,0.48)" stroke-width="1.1" />
<line x1="53.50" y1="422.90" x2="53.50" y2="426.00" stroke="rgba(225,0,0,0.48)" stroke-width="1.1" />
<line x1="86.00" y1="422.97" x2="86.00" y2="426.00" stroke="rgba(225,0,0,0.48)" stroke-width="1.1" />
<line x1="137.60" y1="398.63" x2="137.60" y2="426.00" stroke="rgba(225,0,0,0.48)" stroke-width="1.1" />
<line x1="161.40" y1="349.50" x2="161.40" y2="426.00" stroke="rgba(225,0,0,0.48)" stroke-width="1.1" />
<line x1="188.50" y1="310.90" x2="188.50" y2="426.00" stroke="rgba(225,0,0,0.48)" stroke-width="1.1" />
<line x1="213.30" y1="278.34" x2="213.30" y2="426.00" stroke="rgba(225,0,0,0.48)" stroke-width="1.1" />
<line x1="241.90" y1="267.50" x2="241.90" y2="426.00" stroke="rgba(225,0,0,0.48)" stroke-width="1.1" />
<line x1="281.20" y1="270.33" x2="281.20" y2="426.00" stroke="rgba(225,0,0,0.48)" stroke-width="1.1" />
<line x1="324.40" y1="281.25" x2="324.40" y2="426.00" stroke="rgba(225,0,0,0.48)" stroke-width="1.1" />
<line x1="382.50" y1="310.60" x2="382.50" y2="426.00" stroke="rgba(225,0,0,0.48)" stroke-width="1.1" />
<line x1="440.70" y1="353.21" x2="440.70" y2="426.00" stroke="rgba(225,0,0,0.48)" stroke-width="1.1" />
<line x1="580.80" y1="412.26" x2="580.80" y2="426.00" stroke="rgba(225,0,0,0.48)" stroke-width="1.1" />
<line x1="649.50" y1="415.50" x2="649.50" y2="426.00" stroke="rgba(225,0,0,0.48)" stroke-width="1.1" />
<line x1="723.50" y1="419.15" x2="723.50" y2="426.00" stroke="rgba(225,0,0,0.48)" stroke-width="1.1" />
<line x1="773.30" y1="419.43" x2="773.30" y2="426.00" stroke="rgba(225,0,0,0.48)" stroke-width="1.1" />
<rect x="29.00" y="415.00" width="10.80" height="6.00" fill="#ffff00" stroke="#5ab030" stroke-width="0.7"/>
<rect x="48.10" y="415.00" width="10.80" height="6.00" fill="#ffff00" stroke="#5ab030" stroke-width="0.7"/>
<rect x="80.60" y="415.00" width="10.80" height="6.00" fill="#ffff00" stroke="#5ab030" stroke-width="0.7"/>
<rect x="132.20" y="418.30" width="10.80" height="6.00" fill="#ffff00" stroke="#5ab030" stroke-width="0.7"/>
<rect x="156.00" y="418.30" width="10.80" height="6.00" fill="#ffff00" stroke="#5ab030" stroke-width="0.7"/>
<rect x="183.10" y="418.30" width="10.80" height="6.00" fill="#ffff00" stroke="#5ab030" stroke-width="0.7"/>
<rect x="207.90" y="418.30" width="10.80" height="6.00" fill="#ffff00" stroke="#5ab030" stroke-width="0.7"/>
<rect x="236.50" y="418.30" width="10.80" height="6.00" fill="#ffff00" stroke="#5ab030" stroke-width="0.7"/>
<rect x="275.80" y="418.30" width="10.80" height="6.00" fill="#ffff00" stroke="#5ab030" stroke-width="0.7"/>
<rect x="319.00" y="418.30" width="10.80" height="6.00" fill="#ffff00" stroke="#5ab030" stroke-width="0.7"/>
<rect x="377.10" y="418.30" width="10.80" height="6.00" fill="#ffff00" stroke="#5ab030" stroke-width="0.7"/>
<rect x="435.30" y="418.30" width="10.80" height="6.00" fill="#ffff00" stroke="#5ab030" stroke-width="0.7"/>
<rect x="575.40" y="418.30" width="10.80" height="6.00" fill="#ffff00" stroke="#5ab030" stroke-width="0.7"/>
<rect x="642.40" y="408.50" width="14.20" height="6.00" fill="#ffff00" stroke="#5ab030" stroke-width="0.7"/>
<rect x="716.40" y="411.80" width="14.20" height="6.00" fill="#ffff00" stroke="#5ab030" stroke-width="0.7"/>
<rect x="766.20" y="411.80" width="14.20" height="6.00" fill="#ffff00" stroke="#5ab030" stroke-width="0.7"/>
</g>
<rect x="4.50" y="173.20" width="783.90" height="252.80" fill="none" stroke="#c4c8cc" stroke-width="0.7"/>
<rect x="790.10" y="173.20" width="4.90" height="253.70" fill="url(#slider)" />
<rect x="790.10" y="173.20" width="4.90" height="0.90" fill="#909090" />
<rect x="1.60" y="427.30" width="796.40" height="11.50" fill="#fdfbe4" />
<line x1="1.60" y1="426.70" x2="798.00" y2="426.70" stroke="#dfe6ee" stroke-width="0.8" />
<rect x="610.00" y="429.80" width="29.70" height="5.80" fill="url(#btn)" rx="1"/>
<rect x="642.40" y="429.80" width="18.40" height="5.80" fill="url(#btn)" rx="1"/>
<rect x="663.40" y="429.80" width="20.60" height="5.80" fill="url(#obtn)" rx="1" stroke="#ff9a00" stroke-width="0.7"/>
<rect x="686.30" y="429.80" width="22.50" height="5.80" fill="url(#obtn)" rx="1" stroke="#ff9a00" stroke-width="0.7"/>
<rect x="757.20" y="429.80" width="30.80" height="5.80" fill="url(#btn)" rx="1"/>
<rect x="735.20" y="428.80" width="14.10" height="5.70" fill="#fffcf2" stroke="#d8e8e8" stroke-width="0.7" />
<rect x="1.60" y="438.80" width="796.40" height="1.20" fill="#285577" />
<rect x="1.60" y="440.00" width="796.40" height="8.80" fill="#000" />
<rect x="1.80" y="440.80" width="5.80" height="8.00" fill="#285577" stroke="#4c7899" stroke-width="0.6"/>
<rect x="798.00" y="17.00" width="2.00" height="433.00" fill="url(#rborder)" />
<line x1="444.50" y1="2.20" x2="444.50" y2="7.20" stroke="#777" stroke-width="0.7" />
<line x1="494.50" y1="2.20" x2="494.50" y2="7.20" stroke="#777" stroke-width="0.7" />
<line x1="536.40" y1="2.20" x2="536.40" y2="7.20" stroke="#777" stroke-width="0.7" />
<line x1="550.00" y1="2.20" x2="550.00" y2="7.20" stroke="#777" stroke-width="0.7" />
<line x1="595.60" y1="2.20" x2="595.60" y2="7.20" stroke="#777" stroke-width="0.7" />
<line x1="614.00" y1="2.20" x2="614.00" y2="7.20" stroke="#777" stroke-width="0.7" />
<line x1="646.40" y1="2.20" x2="646.40" y2="7.20" stroke="#777" stroke-width="0.7" />
<line x1="679.00" y1="2.20" x2="679.00" y2="7.20" stroke="#777" stroke-width="0.7" />
<line x1="728.25" y1="2.20" x2="728.25" y2="7.20" stroke="#777" stroke-width="0.7" />
<line x1="749.25" y1="2.20" x2="749.25" y2="7.20" stroke="#777" stroke-width="0.7" />
<rect x="603.0" y="2.6" width="7.6" height="4.2" fill="none" stroke="#eee" stroke-width="0.7"/>
<path d="M604.6,3.4v2.6M606.3,3.4v2.6M608,3.4v2.6" stroke="#eee" stroke-width="0.6"/>
<path d="M684.3,3.0l-1.2,2h1.1l-0.8,2" stroke="#ffa000" stroke-width="0.6" fill="none"/>
<path transform="translate(58.80,30.0) scale(0.98)" d="M0.3,0.5h1.5v1.2h-1.5 M2.2,0.5h1.5v1.4 M0.8,2.2h2.4v1.7h-2.4z M0.8,3h2.4 M2,2.2v1.7" fill="none" stroke="#dfe6ee" stroke-width="0.5"/>
<path transform="translate(63.37,30.0) scale(0.98)" d="M0.9,0.3l-0.7,1.5 M0.6,1.2v2.8 M1.6,1h2.2 M2.7,1v2.8 M1.8,2.3h1.8 M1.4,3.9h2.6 M2.6,0.2l0.3,0.5" fill="none" stroke="#dfe6ee" stroke-width="0.5"/>
<path transform="translate(67.94,30.0) scale(0.98)" d="M2,0.2v3.5l-0.4,0.3 M1,1.5l-0.7,1.5 M3,1.5l0.8,1.5" fill="none" stroke="#dfe6ee" stroke-width="0.5"/>
<path transform="translate(72.51,30.0) scale(0.98)" d="M0.2,1h1.4 M0.9,0.2v3.8 M0.2,2.8l1.4,-0.6 M1.8,0.4h1 M1.8,1.2h1v1h-1z M1.8,3h1 M3,0.3v3.7 M3,1h1 M3,2h1 M3,3h1" fill="none" stroke="#dfe6ee" stroke-width="0.5"/>
<path transform="translate(77.08,30.0) scale(0.98)" d="M0.3,0.4h1.4v2.6h-1.4z M0.3,1.3h1.4 M0.3,2.1h1.4 M0.5,3.2l-0.3,0.7 M1.5,3.2l0.3,0.7 M2.3,0.5h1.6 M2.4,0.5v1.5l-0.3,2 M2.5,2h1.4l-1.4,2 M2.8,2.4l1.2,1.5" fill="none" stroke="#dfe6ee" stroke-width="0.5"/>
<rect x="6.2" y="48.2" width="7" height="4.6" fill="#4a4a4a" rx="0.5"/><rect x="6.6" y="52" width="6" height="1.2" fill="#b8c040"/><circle cx="11.8" cy="49.5" r="0.6" fill="#d04040"/>
<rect x="50.20" y="48.4" width="7.3" height="5.4" fill="#2c6e4e" rx="0.5"/><rect x="52.40" y="47.6" width="3" height="1.2" fill="#2c6e4e"/><circle cx="53.80" cy="51.6" r="1.4" fill="#d8e8d8"/><circle cx="53.80" cy="51.6" r="0.7" fill="#2c6e4e"/>
<rect x="98.10" y="48.4" width="7.3" height="5.4" fill="#2c6e4e" rx="0.5"/><rect x="100.30" y="47.6" width="3" height="1.2" fill="#2c6e4e"/><circle cx="101.70" cy="51.6" r="1.4" fill="#d8e8d8"/><circle cx="101.70" cy="51.6" r="0.7" fill="#2c6e4e"/>
<rect x="142.60" y="48.4" width="7.3" height="5.4" fill="#2c6e4e" rx="0.5"/><rect x="144.80" y="47.6" width="3" height="1.2" fill="#2c6e4e"/><circle cx="146.20" cy="51.6" r="1.4" fill="#d8e8d8"/><circle cx="146.20" cy="51.6" r="0.7" fill="#2c6e4e"/>
<path d="M182.2,48.2h4.6l-1,1.2h-3.4z" fill="#7ec8f0"/><path d="M183.4,49.4h2.6v4.4h-2.6z" fill="#b8e4fa"/><path d="M182.6,53.2h4.6l-0.6,1.4h-3.6z" fill="#4c9ad8"/>
<line x1="726.00" y1="441.80" x2="726.00" y2="446.80" stroke="#cfcfcf" stroke-width="0.6" />
<line x1="549.20" y1="441.50" x2="549.20" y2="447.60" stroke="#777" stroke-width="0.7" />
<line x1="570.80" y1="441.50" x2="570.80" y2="447.60" stroke="#777" stroke-width="0.7" />
<line x1="632.00" y1="441.50" x2="632.00" y2="447.60" stroke="#777" stroke-width="0.7" />
<line x1="661.30" y1="441.50" x2="661.30" y2="447.60" stroke="#777" stroke-width="0.7" />
<line x1="685.00" y1="441.50" x2="685.00" y2="447.60" stroke="#777" stroke-width="0.7" />
<line x1="698.40" y1="441.50" x2="698.40" y2="447.60" stroke="#777" stroke-width="0.7" />
<line x1="750.00" y1="441.50" x2="750.00" y2="447.60" stroke="#777" stroke-width="0.7" /></svg>
<svg width="800" height="450" viewBox="0 0 800 450" style="position:absolute;left:0;top:0;will-change:transform"><defs><clipPath id="tclip"><rect x="4.5" y="170" width="20" height="10"/></clipPath></defs><text x="77.43" y="178.0" font-family="Liberation Sans" font-size="4.9" fill="#505050" stroke="#505050" stroke-width="0.05" textLength="8.5" lengthAdjust="spacingAndGlyphs">300</text>
<text x="154.56" y="178.0" font-family="Liberation Sans" font-size="4.9" fill="#505050" stroke="#505050" stroke-width="0.05" textLength="8.5" lengthAdjust="spacingAndGlyphs">400</text>
<text x="231.68" y="178.0" font-family="Liberation Sans" font-size="4.9" fill="#505050" stroke="#505050" stroke-width="0.05" textLength="8.5" lengthAdjust="spacingAndGlyphs">500</text>
<text x="308.81" y="178.0" font-family="Liberation Sans" font-size="4.9" fill="#505050" stroke="#505050" stroke-width="0.05" textLength="8.5" lengthAdjust="spacingAndGlyphs">600</text>
<text x="385.94" y="178.0" font-family="Liberation Sans" font-size="4.9" fill="#505050" stroke="#505050" stroke-width="0.05" textLength="8.5" lengthAdjust="spacingAndGlyphs">700</text>
<text x="463.07" y="178.0" font-family="Liberation Sans" font-size="4.9" fill="#505050" stroke="#505050" stroke-width="0.05" textLength="8.5" lengthAdjust="spacingAndGlyphs">800</text>
<text x="540.20" y="178.0" font-family="Liberation Sans" font-size="4.9" fill="#505050" stroke="#505050" stroke-width="0.05" textLength="8.5" lengthAdjust="spacingAndGlyphs">900</text>
<text x="617.32" y="178.0" font-family="Liberation Sans" font-size="4.9" fill="#505050" stroke="#505050" stroke-width="0.05" textLength="11.2" lengthAdjust="spacingAndGlyphs">1000</text>
<text x="694.45" y="178.0" font-family="Liberation Sans" font-size="4.9" fill="#505050" stroke="#505050" stroke-width="0.05" textLength="11.2" lengthAdjust="spacingAndGlyphs">1100</text>
<text x="771.58" y="178.0" font-family="Liberation Sans" font-size="4.9" fill="#505050" stroke="#505050" stroke-width="0.05" textLength="11.2" lengthAdjust="spacingAndGlyphs">1200</text>
<text x="0.05" y="178.0" font-family="Liberation Sans" font-size="4.9" fill="#505050" stroke="#505050" stroke-width="0.05" textLength="8.5" lengthAdjust="spacingAndGlyphs" clip-path="url(#tclip)">200</text>
<text x="30.10" y="420.00" font-family="Liberation Sans" font-size="5.3" fill="#1a1a00" stroke="#1a1a00" stroke-width="0.05" textLength="8.6" lengthAdjust="spacingAndGlyphs">244</text>
<text x="49.20" y="420.00" font-family="Liberation Sans" font-size="5.3" fill="#1a1a00" stroke="#1a1a00" stroke-width="0.05" textLength="8.6" lengthAdjust="spacingAndGlyphs">268</text>
<text x="81.70" y="420.00" font-family="Liberation Sans" font-size="5.3" fill="#1a1a00" stroke="#1a1a00" stroke-width="0.05" textLength="8.6" lengthAdjust="spacingAndGlyphs">310</text>
<text x="133.30" y="423.30" font-family="Liberation Sans" font-size="5.3" fill="#1a1a00" stroke="#1a1a00" stroke-width="0.05" textLength="8.6" lengthAdjust="spacingAndGlyphs">377</text>
<text x="157.10" y="423.30" font-family="Liberation Sans" font-size="5.3" fill="#1a1a00" stroke="#1a1a00" stroke-width="0.05" textLength="8.6" lengthAdjust="spacingAndGlyphs">408</text>
<text x="184.20" y="423.30" font-family="Liberation Sans" font-size="5.3" fill="#1a1a00" stroke="#1a1a00" stroke-width="0.05" textLength="8.6" lengthAdjust="spacingAndGlyphs">442</text>
<text x="209.00" y="423.30" font-family="Liberation Sans" font-size="5.3" fill="#1a1a00" stroke="#1a1a00" stroke-width="0.05" textLength="8.6" lengthAdjust="spacingAndGlyphs">475</text>
<text x="237.60" y="423.30" font-family="Liberation Sans" font-size="5.3" fill="#1a1a00" stroke="#1a1a00" stroke-width="0.05" textLength="8.6" lengthAdjust="spacingAndGlyphs">512</text>
<text x="276.90" y="423.30" font-family="Liberation Sans" font-size="5.3" fill="#1a1a00" stroke="#1a1a00" stroke-width="0.05" textLength="8.6" lengthAdjust="spacingAndGlyphs">563</text>
<text x="320.10" y="423.30" font-family="Liberation Sans" font-size="5.3" fill="#1a1a00" stroke="#1a1a00" stroke-width="0.05" textLength="8.6" lengthAdjust="spacingAndGlyphs">620</text>
<text x="378.20" y="423.30" font-family="Liberation Sans" font-size="5.3" fill="#1a1a00" stroke="#1a1a00" stroke-width="0.05" textLength="8.6" lengthAdjust="spacingAndGlyphs">692</text>
<text x="436.40" y="423.30" font-family="Liberation Sans" font-size="5.3" fill="#1a1a00" stroke="#1a1a00" stroke-width="0.05" textLength="8.6" lengthAdjust="spacingAndGlyphs">770</text>
<text x="576.50" y="423.30" font-family="Liberation Sans" font-size="5.3" fill="#1a1a00" stroke="#1a1a00" stroke-width="0.05" textLength="8.6" lengthAdjust="spacingAndGlyphs">952</text>
<text x="643.50" y="413.50" font-family="Liberation Sans" font-size="5.3" fill="#1a1a00" stroke="#1a1a00" stroke-width="0.05" textLength="12.0" lengthAdjust="spacingAndGlyphs">1042</text>
<text x="717.50" y="416.80" font-family="Liberation Sans" font-size="5.3" fill="#1a1a00" stroke="#1a1a00" stroke-width="0.05" textLength="12.0" lengthAdjust="spacingAndGlyphs">1138</text>
<text x="767.30" y="416.80" font-family="Liberation Sans" font-size="5.3" fill="#1a1a00" stroke="#1a1a00" stroke-width="0.05" textLength="12.0" lengthAdjust="spacingAndGlyphs">1201</text><text x="2.40" y="7.20" font-family="Liberation Sans" font-weight="normal" font-size="5.40" fill="#ffffff" stroke="#ffffff" stroke-width="0.05" textLength="2.50" lengthAdjust="spacingAndGlyphs" >2</text>
<text x="9.50" y="7.20" font-family="Liberation Sans" font-weight="normal" font-size="5.40" fill="#888888" stroke="#888888" stroke-width="0" textLength="2.50" lengthAdjust="spacingAndGlyphs" >3</text>
<text x="419.15" y="6.50" font-family="Liberation Mono" font-weight="normal" font-size="4.90" fill="#e8e8e8" stroke="#e8e8e8" stroke-width="0.04" textLength="22.60" lengthAdjust="spacingAndGlyphs" >RAM 28.7G</text>
<text x="448.05" y="6.50" font-family="Liberation Mono" font-weight="normal" font-size="4.90" fill="#e8e8e8" stroke="#e8e8e8" stroke-width="0.04" textLength="14.80" lengthAdjust="spacingAndGlyphs" >/ 187G</text>
<text x="468.75" y="6.50" font-family="Liberation Mono" font-weight="normal" font-size="4.90" fill="#e8e8e8" stroke="#e8e8e8" stroke-width="0.04" textLength="22.20" lengthAdjust="spacingAndGlyphs" >data 870G</text>
<text x="498.85" y="6.50" font-family="Liberation Mono" font-weight="normal" font-size="4.90" fill="#00dd00" stroke="#00dd00" stroke-width="0.04" textLength="34.40" lengthAdjust="spacingAndGlyphs" >192.168.66.103</text>
<text x="539.85" y="6.50" font-family="Liberation Mono" font-weight="normal" font-size="4.90" fill="#eeee00" stroke="#eeee00" stroke-width="0.04" textLength="7.40" lengthAdjust="spacingAndGlyphs" >72%</text>
<text x="553.00" y="6.50" font-family="Liberation Mono" font-weight="normal" font-size="4.90" fill="#e8e8e8" stroke="#e8e8e8" stroke-width="0.04" textLength="37.15" lengthAdjust="spacingAndGlyphs" >IN 2.7M OUT 94K</text>
<text x="599.25" y="6.50" font-family="Liberation Mono" font-weight="normal" font-size="4.90" fill="#e8e8e8" stroke="#e8e8e8" stroke-width="0.04" textLength="2.30" lengthAdjust="spacingAndGlyphs" >@</text>
<text x="617.75" y="6.50" font-family="Liberation Mono" font-weight="normal" font-size="4.90" fill="#e8e8e8" stroke="#e8e8e8" stroke-width="0.04" textLength="24.00" lengthAdjust="spacingAndGlyphs" >CPU 36.28%</text>
<text x="650.25" y="6.50" font-family="Liberation Mono" font-weight="normal" font-size="4.90" fill="#e8e8e8" stroke="#e8e8e8" stroke-width="0.04" textLength="22.50" lengthAdjust="spacingAndGlyphs" >load 2.51</text>
<text x="687.25" y="6.50" font-family="Liberation Mono" font-weight="normal" font-size="4.90" fill="#ffa000" stroke="#ffa000" stroke-width="0.04" textLength="37.25" lengthAdjust="spacingAndGlyphs" >20% DIS (00:31)</text>
<text x="732.00" y="6.50" font-family="Liberation Mono" font-weight="normal" font-size="4.90" fill="#e8e8e8" stroke="#e8e8e8" stroke-width="0.04" textLength="13.50" lengthAdjust="spacingAndGlyphs" >0.00°C</text>
<text x="753.00" y="6.50" font-family="Liberation Mono" font-weight="normal" font-size="4.90" fill="#e8e8e8" stroke="#e8e8e8" stroke-width="0.04" textLength="47.25" lengthAdjust="spacingAndGlyphs" >2025-04-05 10:34:32</text>
<text x="0.80" y="14.60" font-family="Liberation Mono" font-weight="normal" font-size="4.80" fill="#8a8a8a" stroke="#8a8a8a" stroke-width="0" textLength="78.00" lengthAdjust="spacingAndGlyphs" >el-bart@tweety: ~/src/theremino</text>
<text x="401.20" y="15.00" font-family="Liberation Sans" font-weight="normal" font-size="4.80" fill="#ffffff" stroke="#ffffff" stroke-width="0" textLength="9.35" lengthAdjust="spacingAndGlyphs" >QEMU</text>
<text x="4.40" y="24.90" font-family="Liberation Sans" font-weight="normal" font-size="5.30" fill="#3a3c3e" stroke="#3a3c3e" stroke-width="0.02" textLength="22.30" lengthAdjust="spacingAndGlyphs" >Machine</text>
<text x="34.05" y="24.90" font-family="Liberation Sans" font-weight="normal" font-size="5.30" fill="#3a3c3e" stroke="#3a3c3e" stroke-width="0.02" textLength="12.54" lengthAdjust="spacingAndGlyphs" >View</text>
<text x="2.10" y="33.90" font-family="Liberation Mono" font-weight="normal" font-size="5.10" fill="#e8eef4" stroke="#e8eef4" stroke-width="0" textLength="53.80" lengthAdjust="spacingAndGlyphs" >Theremino Spectrometer</text>
<text x="83.30" y="33.90" font-family="Liberation Mono" font-weight="normal" font-size="5.10" fill="#e8eef4" stroke="#e8eef4" stroke-width="0" textLength="9.75" lengthAdjust="spacingAndGlyphs" >V0.2</text>
<text x="8.40" y="42.75" font-family="Liberation Sans" font-weight="normal" font-size="4.90" fill="#2a2a2a" stroke="#2a2a2a" stroke-width="0.08" textLength="6.30" lengthAdjust="spacingAndGlyphs" >File</text>
<text x="24.70" y="42.75" font-family="Liberation Sans" font-weight="normal" font-size="4.90" fill="#2a2a2a" stroke="#2a2a2a" stroke-width="0.08" textLength="9.70" lengthAdjust="spacingAndGlyphs" >Tools</text>
<text x="43.50" y="42.75" font-family="Liberation Sans" font-weight="normal" font-size="4.90" fill="#2a2a2a" stroke="#2a2a2a" stroke-width="0.08" textLength="19.20" lengthAdjust="spacingAndGlyphs" >Language</text>
<text x="72.00" y="42.75" font-family="Liberation Sans" font-weight="normal" font-size="4.90" fill="#2a2a2a" stroke="#2a2a2a" stroke-width="0.08" textLength="8.70" lengthAdjust="spacingAndGlyphs" >Help</text>
<text x="89.55" y="42.75" font-family="Liberation Sans" font-weight="normal" font-size="4.90" fill="#2a2a2a" stroke="#2a2a2a" stroke-width="0.08" textLength="11.40" lengthAdjust="spacingAndGlyphs" >About</text>
<text x="16.20" y="52.90" font-family="Liberation Sans" font-weight="normal" font-size="5.00" fill="#2a2a2a" stroke="#2a2a2a" stroke-width="0.08" textLength="28.20" lengthAdjust="spacingAndGlyphs" >Video controls</text>
<text x="59.55" y="52.90" font-family="Liberation Sans" font-weight="normal" font-size="5.00" fill="#2a2a2a" stroke="#2a2a2a" stroke-width="0.08" textLength="31.35" lengthAdjust="spacingAndGlyphs" >Spectrum image</text>
<text x="106.90" y="52.90" font-family="Liberation Sans" font-weight="normal" font-size="5.00" fill="#2a2a2a" stroke="#2a2a2a" stroke-width="0.08" textLength="28.70" lengthAdjust="spacingAndGlyphs" >Camera image</text>
<text x="152.40" y="52.90" font-family="Liberation Sans" font-weight="normal" font-size="5.00" fill="#2a2a2a" stroke="#2a2a2a" stroke-width="0.08" textLength="21.70" lengthAdjust="spacingAndGlyphs" >Total image</text>
<text x="190.05" y="52.90" font-family="Liberation Sans" font-weight="normal" font-size="5.00" fill="#2a2a2a" stroke="#2a2a2a" stroke-width="0.08" textLength="27.40" lengthAdjust="spacingAndGlyphs" >Write DataFile</text>
<text x="780.60" y="52.90" font-family="Liberation Sans" font-weight="normal" font-size="5.00" fill="#2a2a2a" stroke="#2a2a2a" stroke-width="0.06" textLength="8.30" lengthAdjust="spacingAndGlyphs" >Run</text>
<text x="8.30" y="61.00" font-family="Liberation Sans" font-weight="normal" font-size="5.00" fill="#5252b0" stroke="#5252b0" stroke-width="0.0" textLength="43.40" lengthAdjust="spacingAndGlyphs" >Video Input Device</text>
<text x="10.90" y="69.80" font-family="Liberation Sans" font-weight="normal" font-size="4.60" fill="#2a2a2a" stroke="#2a2a2a" stroke-width="0.06" textLength="64.90" lengthAdjust="spacingAndGlyphs" >0 USB 2.0 Camera: USB-ZH</text>
<text x="15.90" y="80.40" font-family="Liberation Sans" font-weight="normal" font-size="4.80" fill="#4848b0" stroke="#4848b0" stroke-width="0.05" textLength="15.05" lengthAdjust="spacingAndGlyphs" >1920 x</text>
<text x="43.10" y="79.90" font-family="Liberation Sans" font-weight="normal" font-size="4.80" fill="#4848b0" stroke="#4848b0" stroke-width="0.05" textLength="10.00" lengthAdjust="spacingAndGlyphs" >0 fps</text>
<text x="62.80" y="80.40" font-family="Liberation Sans" font-weight="normal" font-size="4.80" fill="#4848b0" stroke="#4848b0" stroke-width="0.05" textLength="13.80" lengthAdjust="spacingAndGlyphs" >13 mS</text>
<text x="8.30" y="93.00" font-family="Liberation Sans" font-weight="normal" font-size="5.00" fill="#5252b0" stroke="#5252b0" stroke-width="0.0" textLength="27.00" lengthAdjust="spacingAndGlyphs" >Save Image</text>
<text x="77.10" y="97.80" font-family="Liberation Sans" font-weight="normal" font-size="4.90" fill="#404040" stroke="#404040" stroke-width="0.06" textLength="27.40" lengthAdjust="spacingAndGlyphs" >JPEG quality</text>
<text x="110.70" y="98.60" font-family="Liberation Sans" font-weight="normal" font-size="5.20" fill="#303030" stroke="#303030" stroke-width="0.06" textLength="9.00" lengthAdjust="spacingAndGlyphs" >100</text>
<text x="12.30" y="100.80" font-family="Liberation Sans" font-weight="normal" font-size="4.90" fill="#505050" stroke="#505050" stroke-width="0.06" textLength="13.00" lengthAdjust="spacingAndGlyphs" >Name</text>
<text x="41.90" y="107.20" font-family="Liberation Sans" font-weight="normal" font-size="4.80" fill="#303030" stroke="#303030" stroke-width="0.06" textLength="11.00" lengthAdjust="spacingAndGlyphs" >0_06</text>
<text x="88.00" y="107.40" font-family="Liberation Sans" font-weight="normal" font-size="4.80" fill="#606060" stroke="#606060" stroke-width="0.06" textLength="1.00" lengthAdjust="spacingAndGlyphs" >.</text>
<text x="95.10" y="107.60" font-family="Liberation Sans" font-weight="normal" font-size="5.00" fill="#303030" stroke="#303030" stroke-width="0.06" textLength="7.80" lengthAdjust="spacingAndGlyphs" >JPG</text>
<text x="12.30" y="116.60" font-family="Liberation Sans" font-weight="normal" font-size="4.90" fill="#404040" stroke="#404040" stroke-width="0.06" textLength="76.60" lengthAdjust="spacingAndGlyphs" >Path for Images and the DataFile</text>
<text x="36.30" y="122.20" font-family="Liberation Sans" font-weight="normal" font-size="4.60" fill="#303030" stroke="#303030" stroke-width="0.06" textLength="62.60" lengthAdjust="spacingAndGlyphs" >C:\users\user\Documents\</text>
<text x="8.30" y="139.00" font-family="Liberation Sans" font-weight="normal" font-size="5.00" fill="#5252b0" stroke="#5252b0" stroke-width="0.0" textLength="48.30" lengthAdjust="spacingAndGlyphs" >Sync and integration</text>
<text x="23.00" y="148.00" font-family="Liberation Sans" font-weight="normal" font-size="4.90" fill="#505050" stroke="#505050" stroke-width="0.06" textLength="18.50" lengthAdjust="spacingAndGlyphs" >Slot Run</text>
<text x="21.60" y="155.80" font-family="Liberation Sans" font-weight="normal" font-size="4.90" fill="#505050" stroke="#505050" stroke-width="0.06" textLength="19.90" lengthAdjust="spacingAndGlyphs" >Slot Stop</text>
<text x="11.00" y="164.20" font-family="Liberation Sans" font-weight="normal" font-size="4.90" fill="#505050" stroke="#505050" stroke-width="0.06" textLength="30.50" lengthAdjust="spacingAndGlyphs" >Slot WriteFile</text>
<text x="49.60" y="147.60" font-family="Liberation Sans" font-weight="normal" font-size="4.80" fill="#404040" stroke="#404040" stroke-width="0.06" textLength="4.30" lengthAdjust="spacingAndGlyphs" >-1</text>
<text x="49.60" y="156.40" font-family="Liberation Sans" font-weight="normal" font-size="4.80" fill="#404040" stroke="#404040" stroke-width="0.06" textLength="4.30" lengthAdjust="spacingAndGlyphs" >-1</text>
<text x="49.60" y="165.00" font-family="Liberation Sans" font-weight="normal" font-size="4.80" fill="#404040" stroke="#404040" stroke-width="0.06" textLength="4.30" lengthAdjust="spacingAndGlyphs" >-1</text>
<text x="77.50" y="145.50" font-family="Liberation Sans" font-weight="normal" font-size="4.90" fill="#505050" stroke="#505050" stroke-width="0.06" textLength="29.30" lengthAdjust="spacingAndGlyphs" >Rising speed</text>
<text x="76.30" y="153.60" font-family="Liberation Sans" font-weight="normal" font-size="4.90" fill="#505050" stroke="#505050" stroke-width="0.06" textLength="30.50" lengthAdjust="spacingAndGlyphs" >Falling speed</text>
<text x="113.20" y="146.00" font-family="Liberation Sans" font-weight="normal" font-size="5.00" fill="#404040" stroke="#404040" stroke-width="0.06" textLength="6.10" lengthAdjust="spacingAndGlyphs" >30</text>
<text x="113.20" y="154.40" font-family="Liberation Sans" font-weight="normal" font-size="5.00" fill="#404040" stroke="#404040" stroke-width="0.06" textLength="6.10" lengthAdjust="spacingAndGlyphs" >30</text>
<text x="70.10" y="164.00" font-family="Liberation Sans" font-weight="bold" font-size="4.80" fill="#202020" stroke="#202020" stroke-width="0.06" textLength="48.67" lengthAdjust="spacingAndGlyphs" >Reset spectrum data</text>
<text x="134.30" y="61.00" font-family="Liberation Sans" font-weight="normal" font-size="5.00" fill="#5252b0" stroke="#5252b0" stroke-width="0.0" textLength="11.40" lengthAdjust="spacingAndGlyphs" >Input</text>
<text x="135.20" y="73.20" font-family="Liberation Sans" font-weight="normal" font-size="4.90" fill="#606060" stroke="#606060" stroke-width="0.06" textLength="7.60" lengthAdjust="spacingAndGlyphs" >Flip</text>
<text x="135.80" y="100.00" font-family="Liberation Sans" font-weight="normal" font-size="4.90" fill="#606060" stroke="#606060" stroke-width="0.06" textLength="13.40" lengthAdjust="spacingAndGlyphs" >Size Y</text>
<text x="141.30" y="106.60" font-family="Liberation Sans" font-weight="normal" font-size="4.80" fill="#404040" stroke="#404040" stroke-width="0.06" textLength="2.70" lengthAdjust="spacingAndGlyphs" >9</text>
<text x="135.30" y="122.80" font-family="Liberation Sans" font-weight="normal" font-size="4.90" fill="#606060" stroke="#606060" stroke-width="0.06" textLength="15.30" lengthAdjust="spacingAndGlyphs" >Start Y</text>
<text x="140.40" y="128.80" font-family="Liberation Sans" font-weight="normal" font-size="4.80" fill="#404040" stroke="#404040" stroke-width="0.06" textLength="5.50" lengthAdjust="spacingAndGlyphs" >44</text>
<text x="155.30" y="166.50" font-family="Liberation Sans" font-weight="normal" font-size="4.90" fill="#606060" stroke="#606060" stroke-width="0.06" textLength="15.00" lengthAdjust="spacingAndGlyphs" >Start X</text>
<text x="179.30" y="166.40" font-family="Liberation Sans" font-weight="normal" font-size="5.00" fill="#404040" stroke="#404040" stroke-width="0.06" textLength="2.30" lengthAdjust="spacingAndGlyphs" >0</text>
<text x="760.30" y="166.50" font-family="Liberation Sans" font-weight="normal" font-size="4.90" fill="#606060" stroke="#606060" stroke-width="0.06" textLength="12.50" lengthAdjust="spacingAndGlyphs" >End X</text>
<text x="777.80" y="166.40" font-family="Liberation Sans" font-weight="normal" font-size="5.00" fill="#404040" stroke="#404040" stroke-width="0.06" textLength="9.40" lengthAdjust="spacingAndGlyphs" >100</text>
<text x="6.30" y="434.80" font-family="Liberation Sans" font-weight="normal" font-size="5.00" fill="#555555" stroke="#555555" stroke-width="0.04" textLength="12.20" lengthAdjust="spacingAndGlyphs" >Curs:</text>
<text x="20.90" y="434.80" font-family="Liberation Sans" font-weight="normal" font-size="5.00" fill="#555555" stroke="#555555" stroke-width="0.04" textLength="10.40" lengthAdjust="spacingAndGlyphs" >76%</text>
<text x="35.10" y="434.80" font-family="Liberation Sans" font-weight="normal" font-size="5.00" fill="#555555" stroke="#555555" stroke-width="0.04" textLength="9.00" lengthAdjust="spacingAndGlyphs" >947</text>
<text x="46.30" y="434.80" font-family="Liberation Sans" font-weight="normal" font-size="5.00" fill="#555555" stroke="#555555" stroke-width="0.04" textLength="8.40" lengthAdjust="spacingAndGlyphs" >nm</text>
<text x="613.00" y="434.10" font-family="Liberation Sans" font-weight="normal" font-size="4.80" fill="#303030" stroke="#303030" stroke-width="0.1" textLength="23.20" lengthAdjust="spacingAndGlyphs" >Reference</text>
<text x="646.30" y="434.10" font-family="Liberation Sans" font-weight="normal" font-size="4.80" fill="#303030" stroke="#303030" stroke-width="0.1" textLength="9.40" lengthAdjust="spacingAndGlyphs" >Dips</text>
<text x="667.05" y="434.10" font-family="Liberation Sans" font-weight="normal" font-size="4.80" fill="#303030" stroke="#303030" stroke-width="0.1" textLength="13.05" lengthAdjust="spacingAndGlyphs" >Peaks</text>
<text x="690.50" y="434.10" font-family="Liberation Sans" font-weight="normal" font-size="4.80" fill="#303030" stroke="#303030" stroke-width="0.1" textLength="14.40" lengthAdjust="spacingAndGlyphs" >Colors</text>
<text x="760.50" y="434.10" font-family="Liberation Sans" font-weight="normal" font-size="4.80" fill="#303030" stroke="#303030" stroke-width="0.1" textLength="24.20" lengthAdjust="spacingAndGlyphs" >Trim scale</text>
<text x="721.50" y="434.00" font-family="Liberation Sans" font-weight="normal" font-size="4.60" fill="#505050" stroke="#505050" stroke-width="0.06" textLength="10.70" lengthAdjust="spacingAndGlyphs" >Filter</text>
<text x="739.50" y="434.00" font-family="Liberation Sans" font-weight="normal" font-size="5.00" fill="#303030" stroke="#303030" stroke-width="0.06" textLength="6.20" lengthAdjust="spacingAndGlyphs" >30</text>
<text x="3.30" y="446.60" font-family="Liberation Sans" font-weight="normal" font-size="5.20" fill="#e8e8e8" stroke="#e8e8e8" stroke-width="0.03" textLength="1.90" lengthAdjust="spacingAndGlyphs" >1</text>
<text x="490.75" y="446.60" font-family="Liberation Mono" font-weight="normal" font-size="4.80" fill="#00c000" stroke="#00c000" stroke-width="0.04" textLength="57.00" lengthAdjust="spacingAndGlyphs" >fe80::5054:ff:fe12:3456</text>
<text x="551.85" y="446.60" font-family="Liberation Mono" font-weight="normal" font-size="4.80" fill="#dd0000" stroke="#dd0000" stroke-width="0.04" textLength="16.60" lengthAdjust="spacingAndGlyphs" >W: down</text>
<text x="572.95" y="446.60" font-family="Liberation Mono" font-weight="normal" font-size="4.80" fill="#00c000" stroke="#00c000" stroke-width="0.04" textLength="57.20" lengthAdjust="spacingAndGlyphs" >E: 10.0.2.15 (0 Mbit/s)</text>
<text x="633.95" y="446.60" font-family="Liberation Mono" font-weight="normal" font-size="4.80" fill="#e8e8e8" stroke="#e8e8e8" stroke-width="0.04" textLength="24.70" lengthAdjust="spacingAndGlyphs" >No battery</text>
<text x="663.25" y="446.60" font-family="Liberation Mono" font-weight="normal" font-size="4.80" fill="#e8e8e8" stroke="#e8e8e8" stroke-width="0.04" textLength="19.50" lengthAdjust="spacingAndGlyphs" >86.4 GiB</text>
<text x="687.25" y="446.60" font-family="Liberation Mono" font-weight="normal" font-size="4.80" fill="#e8e8e8" stroke="#e8e8e8" stroke-width="0.04" textLength="9.30" lengthAdjust="spacingAndGlyphs" >1.52</text>
<text x="701.15" y="446.60" font-family="Liberation Mono" font-weight="normal" font-size="4.80" fill="#e8e8e8" stroke="#e8e8e8" stroke-width="0.04" textLength="21.40" lengthAdjust="spacingAndGlyphs" >377.5 MiB</text>
<text x="730.25" y="446.60" font-family="Liberation Mono" font-weight="normal" font-size="4.80" fill="#e8e8e8" stroke="#e8e8e8" stroke-width="0.04" textLength="17.50" lengthAdjust="spacingAndGlyphs" >3.2 GiB</text>
<text x="752.25" y="446.60" font-family="Liberation Mono" font-weight="normal" font-size="4.80" fill="#e8e8e8" stroke="#e8e8e8" stroke-width="0.04" textLength="48.00" lengthAdjust="spacingAndGlyphs" >2025-04-05 10:34:38</text></svg></body></html>
